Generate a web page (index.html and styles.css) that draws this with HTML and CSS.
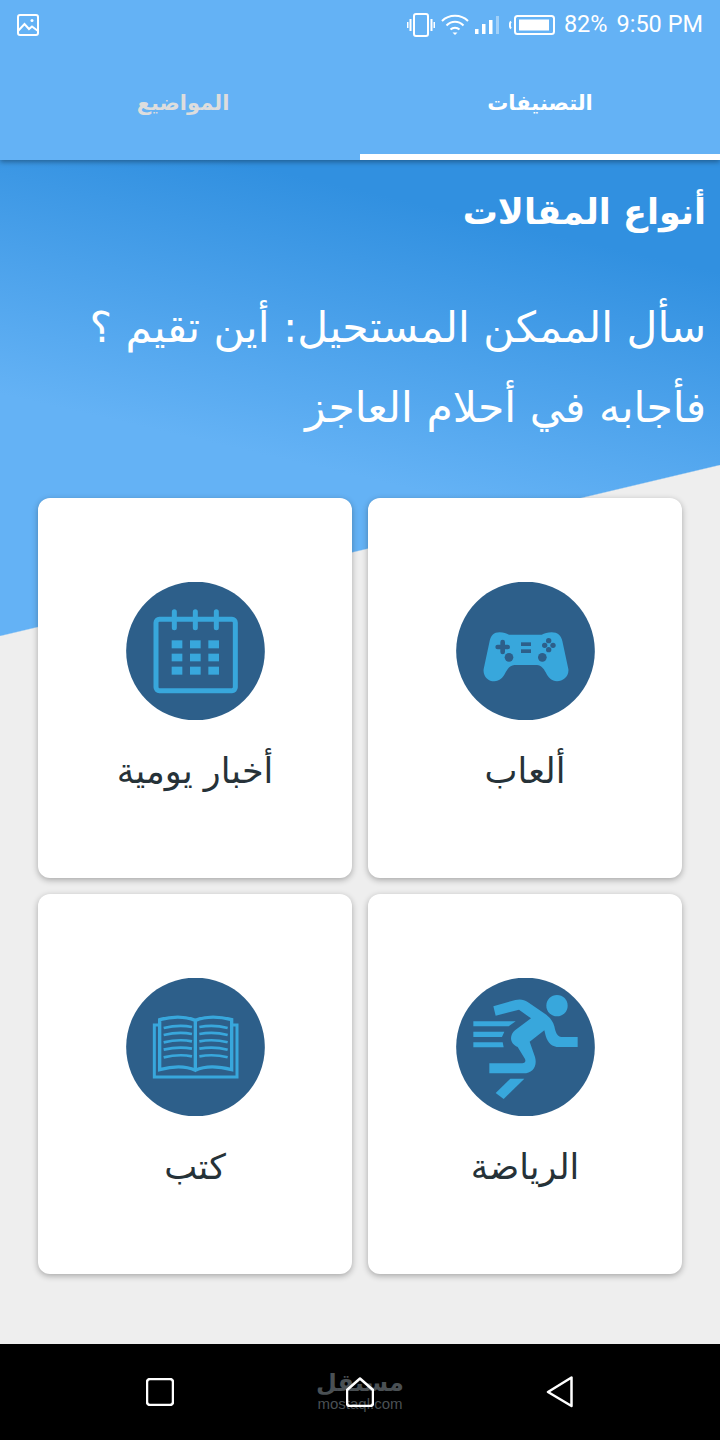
FILE: index.html
```html
<!DOCTYPE html>
<html lang="ar" dir="rtl">
<head>
    <meta charset="UTF-8" />
    <meta name="viewport" content="width=device-width, initial-scale=1.0" />
    <title>أنواع المقالات</title>
    <link rel="stylesheet" href="styles.css">
</head>
<body>
    <header class="appbar">
        <div class="status" dir="ltr">
            <svg class="status-pic" viewBox="0 0 22 22" width="22" height="22">
                <rect x="1" y="1" width="20" height="20" rx="2" />
                <path d="M1 17 L7.500 10 L12 15 L15 12.500 L21 17" />
                <circle cx="15" cy="6.500" r="1.500" class="solid" />
            </svg>
            <div class="status-right">
                <svg class="vibrate" viewBox="0 0 28 28" width="28" height="28">
                    <rect x="7" y="3" width="14" height="22" rx="2" />
                    <path d="M3.500 8 V20 M24.500 8 V20 M0.500 11 V17 M27.500 11 V17" />
                </svg>
                <svg class="wifi" viewBox="0 0 28 24" width="28" height="24">
                    <path d="M1 8 C8 1 20 1 27 8 M5.500 12.500 C10.500 7.500 17.500 7.500 22.500 12.500 M9.500 16.500 C12 14 16 14 18.500 16.500" />
                    <path d="M11.500 19.500 H16.500 L14 22 Z" class="solid" />
                </svg>
                <svg class="signal" viewBox="0 0 24 18" width="24" height="18">
                    <rect x="0" y="13" width="3.500" height="5" class="solid" />
                    <rect x="7" y="8" width="3.500" height="10" class="solid" />
                    <rect x="14" y="4" width="3.500" height="14" class="solid" />
                    <rect x="21" y="0" width="3" height="18" class="solid faded" />
                </svg>
                <svg class="battery" viewBox="0 0 46 20" width="46" height="20">
                    <rect x="6" y="1" width="39" height="18" rx="2.500" />
                    <rect x="10" y="4.500" width="30" height="11" class="solid" />
                    <path d="M2 6.500 C0.500 8 0.500 12 2 13.500" />
                </svg>
                <span class="status-text">82%</span>
                <span class="status-text">9:50 PM</span>
            </div>
        </div>
        <nav class="tabs">
            <a class="tab active">التصنيفات</a>
            <a class="tab">المواضيع</a>
        </nav>
    </header>

    <main class="content">
        <h1 class="title">أنواع المقالات</h1>
        <p class="quote">سأل الممكن المستحيل: أين تقيم ؟</p>
        <p class="quote">فأجابه في أحلام العاجز</p>

        <section class="grid">
            <div class="card">
                <svg class="icon" viewBox="47 37 417 414">
                    <circle cx="255.500" cy="244" r="208" class="disc" />
                    <path class="glyph" d="M178 188 C190 188 198 192 206 195 H304 C312 192 322 188 334 188 C352 188 362 198 366 214 L384 298 C387 320 368 335 350 335 C334 335 324 324 316 308 C310 296 303 288 290 286 H222 C209 288 202 296 196 308 C188 324 178 335 162 335 C144 335 127 320 130 298 L148 214 C152 198 160 188 178 188 Z" />
                    <path class="hole-line" d="M172 232 H202 M187 217 V247" />
                    <rect class="hole" x="242" y="218" width="30" height="11" />
                    <rect class="hole" x="242" y="239" width="30" height="11" />
                    <circle class="hole" cx="325" cy="213" r="8" />
                    <circle class="hole" cx="313" cy="227" r="8" />
                    <circle class="hole" cx="338" cy="227" r="8" />
                    <circle class="hole" cx="325" cy="240" r="8" />
                    <circle class="hole" cx="206" cy="263" r="13" />
                    <circle class="hole" cx="306" cy="263" r="13" />
                </svg>
                <span class="card-label">ألعاب</span>
            </div>
            <div class="card">
                <svg class="icon" viewBox="47 37 417 414">
                    <circle cx="255.500" cy="244" r="208" class="disc" />
                    <rect class="line" x="137" y="149" width="238" height="214" rx="10" stroke-width="15" />
                    <path class="line round" d="M192 126 V174 M255 126 V174 M318 126 V174" stroke-width="15" />
                    <g class="glyph">
                        <rect x="184" y="212" width="32" height="24" />
                        <rect x="239" y="212" width="32" height="24" />
                        <rect x="294" y="212" width="32" height="24" />
                        <rect x="184" y="252" width="32" height="23" />
                        <rect x="239" y="252" width="32" height="23" />
                        <rect x="294" y="252" width="32" height="23" />
                        <rect x="184" y="291" width="32" height="24" />
                        <rect x="239" y="291" width="32" height="24" />
                        <rect x="294" y="291" width="32" height="24" />
                    </g>
                </svg>
                <span class="card-label">أخبار يومية</span>
            </div>
            <div class="card">
                <svg class="icon" viewBox="47 25 417 414">
                    <circle cx="255.500" cy="232" r="208" class="disc" />
                    <circle class="glyph" cx="350" cy="108" r="32" />
                    <path class="glyph" d="M159 110 L225 91 C240 87 252 90 262 97 L318 135 C330 145 338 155 342 170 C346 188 350 202 364 202 H412 V232 H356 C336 232 322 220 316 198 L312 182 L268 216 L284 262 C292 290 276 311 250 311 H147 V281 H246 C254 281 257 276 254 268 L232 232 C208 222 206 198 224 182 L272 146 L236 120 L166 138 Z" />
                    <path class="glyph" d="M210 327 H252 L190 388 L166 370 Z" />
                    <path class="glyph" d="M99 155 H226 L205 170 H99 Z M99 186 H192 L185 202 H99 Z M99 218 H187 L190 233 H99 Z" />
                </svg>
                <span class="card-label">الرياضة</span>
            </div>
            <div class="card">
                <svg class="icon" viewBox="47 25 417 414">
                    <circle cx="255.500" cy="232" r="208" class="disc" />
                    <path class="line" stroke-width="9" d="M148 166 H132 V322 H380 V166 H364" />
                    <path class="line" stroke-width="10" d="M255 302 C225 288 185 290 148 300 V150 C185 140 225 140 255 152 C285 140 325 140 364 150 V300 C325 290 285 288 255 302 Z M255 152 V302" />
                    <path class="line" stroke-width="8" d="M160 175 C190 168 220 167 245 172 M160 196 C190 189 220 188 245 193 M160 218 C190 211 220 210 245 215 M160 240 C190 233 220 232 245 237 M160 263 C190 256 220 255 245 260 M267 172 C295 167 325 168 352 175 M267 193 C295 188 325 189 352 196 M267 215 C295 210 325 211 352 218 M267 237 C295 232 325 233 352 240 M267 260 C295 255 325 256 352 263" />
                </svg>
                <span class="card-label">كتب</span>
            </div>
        </section>
    </main>

    <footer class="navbar" dir="ltr">
        <div class="watermark">
            <span class="wm-ar">مستقل</span>
            <span class="wm-en">mostaql.com</span>
        </div>
        <svg class="nav-icon" viewBox="0 0 28 28" width="28" height="28">
            <rect x="1" y="1" width="26" height="26" rx="3" />
        </svg>
        <svg class="nav-icon" viewBox="0 0 28 30" width="28" height="30">
            <path d="M1 13 L14 1.500 L27 13 V26 Q27 29 24 29 H4 Q1 29 1 26 Z" />
        </svg>
        <svg class="nav-icon" viewBox="0 0 28 32" width="28" height="32">
            <path d="M25.500 1.500 V30 L2 16 Z" />
        </svg>
    </footer>
</body>
</html>
```

FILE: styles.css
```css
html {
    font: 1em/1.4 "DejaVu Sans", sans-serif;
}

body {
    margin: 0;
    padding: 0;
    width: 720px;
    height: 1440px;
    display: flex;
    flex-direction: column;
    background-color: #eee;
}

/* top bar */
.appbar {
    position: relative;
    z-index: 2;
    height: 160px;
    background-color: #64b2f5;
    box-shadow: 0 2px 5px rgba(0, 0, 0, 0.35);
}

.status {
    display: flex;
    justify-content: space-between;
    align-items: center;
    height: 50px;
    padding: 0 17px;
}

.status-right {
    display: flex;
    align-items: center;
    gap: 6px;
}

.status svg {
    fill: none;
    stroke: #fff;
    stroke-width: 2;
    flex: none;
}

.status svg .solid {
    fill: #fff;
    stroke: none;
}

.status svg .faded {
    opacity: 0.4;
}

.status svg.battery {
    margin-left: 4px;
}

.status-text {
    font: 23.500px/1 Roboto, sans-serif;
    color: #fff;
    margin-left: 3px;
}

.tabs {
    display: flex;
    height: 110px;
}

.tab {
    flex: 0 0 360px;
    display: flex;
    align-items: center;
    justify-content: center;
    padding-bottom: 2px;
    box-sizing: border-box;
    font-size: 21px;
    font-weight: bold;
    color: #ddd;
}

.tab:not(.active) {
    padding-left: 6px;
}

.tab.active {
    color: #fff;
    border-bottom: 6px solid #fff;
    padding-bottom: 0;
    padding-top: 4px;
}

/* page body with the slanted blue part */
.content {
    flex: 1;
    padding: 22px 14px 0;
    color: #fff;
    background:
        linear-gradient(#eee, #eee) 0 476px / 100% 100% no-repeat,
        linear-gradient(to bottom right, transparent 49.800%, #eee 50.200%) 0 305px / 100% 171px no-repeat,
        linear-gradient(193deg, #3190e0 110px, #64b2f5 390px) 0 0 / 100% 476px no-repeat;
}

.title {
    margin: 0;
    font-size: 35px;
    font-weight: bold;
    line-height: 60px;
}

.quote {
    margin: 0;
    font-size: 42.500px;
    line-height: 80px;
}

.quote:first-of-type {
    margin-top: 46px;
}

.grid {
    display: grid;
    grid-template-columns: 314px 314px;
    grid-auto-rows: 380px;
    gap: 16px;
    margin: 50px 24px 0;
}

.card {
    display: flex;
    flex-direction: column;
    align-items: center;
    padding-top: 84px;
    box-sizing: border-box;
    background-color: #fff;
    border-radius: 12px;
    box-shadow: 0 2px 6px rgba(0, 0, 0, 0.3);
}

.icon {
    width: 139px;
    height: 138px;
}

.disc {
    fill: #2d5f8a;
}

.glyph {
    fill: #38a7dc;
}

.hole {
    fill: #2d5f8a;
}

.hole-line {
    fill: none;
    stroke: #2d5f8a;
    stroke-width: 14;
    stroke-linecap: round;
}

.line {
    fill: none;
    stroke: #38a7dc;
}

.line.round {
    stroke-linecap: round;
}

.card-label {
    margin-top: 24px;
    font-size: 35px;
    line-height: 54px;
    color: #263238;
}

/* android buttons */
.navbar {
    position: relative;
    display: flex;
    justify-content: center;
    align-items: center;
    gap: 172px;
    height: 96px;
    background-color: #000;
}

.nav-icon {
    position: relative;
    fill: none;
    stroke: #fff;
    stroke-width: 2.500;
    stroke-linejoin: round;
    flex: none;
}

.watermark {
    position: absolute;
    left: 316px;
    top: 25px;
    width: 88px;
    display: flex;
    flex-direction: column;
    align-items: center;
    color: #4a5054;
}

.wm-ar {
    font-size: 24px;
    font-weight: bold;
    line-height: 28px;
}

.wm-en {
    font: 15px/14px "Liberation Sans", sans-serif;
}
```
